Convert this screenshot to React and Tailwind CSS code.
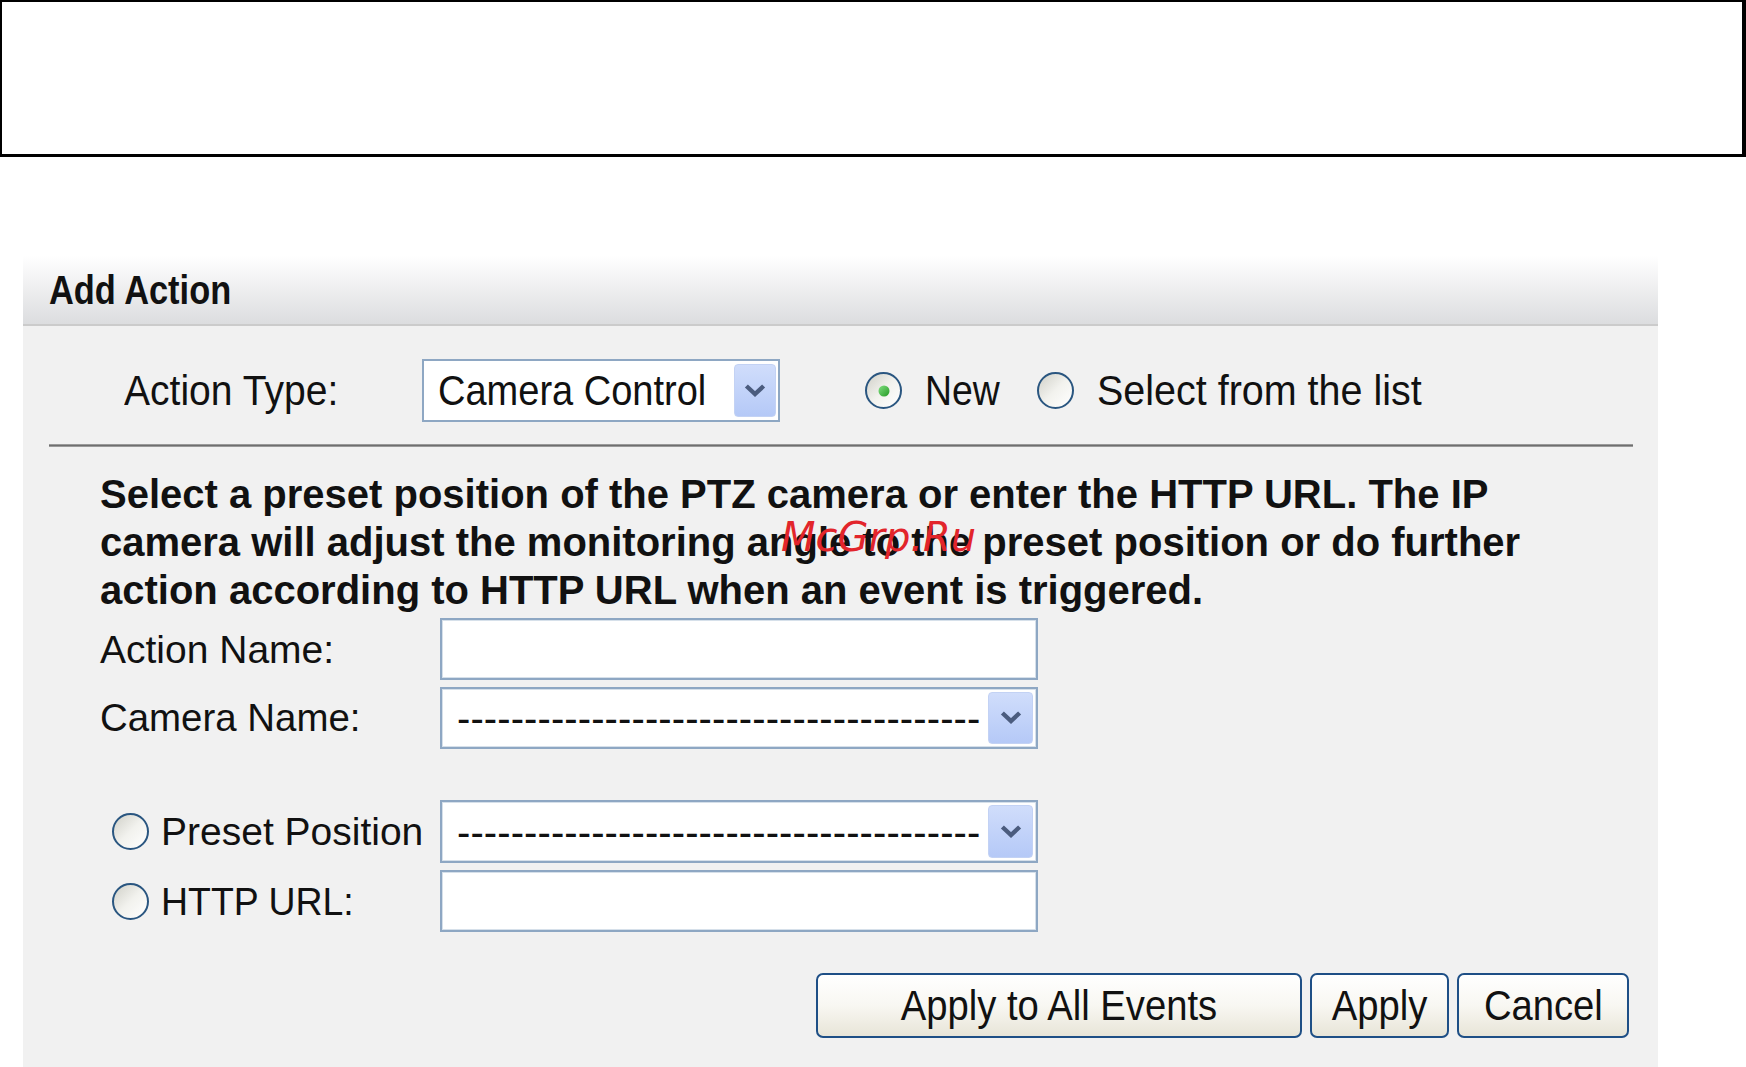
import React from 'react';

const DASHES = '---------------------------------------';

function Chevron() {
  return (
    <svg width="22" height="14" viewBox="0 0 22 14" fill="none">
      <path d="M4 3.5 L11 10 L18 3.5" stroke="#4b5c7e" strokeWidth="4.4" strokeLinecap="square" />
    </svg>
  );
}

function ArrowButton({ className = '' }) {
  return (
    <div className={`flex items-center justify-center self-stretch rounded-[4px] border border-[#c3d2f4] bg-gradient-to-b from-[#d0ddfb] to-[#b5c9f7] ${className}`}>
      <Chevron />
    </div>
  );
}

function Radio({ checked = false }) {
  return (
    <div className="relative h-[37px] w-[37px] shrink-0 rounded-full border-2 border-[#2a5680] bg-gradient-to-br from-[#d0d0c8] via-[#f2f2ee] to-white">
      {checked && (
        <div className="absolute left-1/2 top-1/2 h-[11px] w-[11px] -translate-x-1/2 -translate-y-1/2 rounded-full bg-gradient-to-br from-[#7ee07e] to-[#1f9a1f]" />
      )}
    </div>
  );
}

function TextBox() {
  return (
    <div className="h-full w-[598px] border-2 border-[#8ea7c3] bg-white shadow-[inset_0_0_0_1px_#d6e0ea]" />
  );
}

function DropDown() {
  return (
    <div className="flex h-full w-[598px] items-center border-2 border-[#8ea7c3] bg-white py-[3px] pl-[15px] pr-[3px] shadow-[inset_0_0_0_1px_#d6e0ea]">
      <span className="flex-1 whitespace-nowrap text-[40px] leading-none tracking-[0.1px] text-[#111]">{DASHES}</span>
      <ArrowButton className="w-[45px]" />
    </div>
  );
}

function Btn({ label, width }) {
  return (
    <button className={`flex h-full items-center justify-center rounded-[7px] border-2 border-[#1e4f86] bg-gradient-to-b from-white via-[#f8f7f2] to-[#e8e5d8] ${width}`}>
      <span className="inline-block scale-x-[0.91] text-[42px] leading-none text-[#111]">{label}</span>
    </button>
  );
}

export default function App() {
  return (
    <div className="h-[1067px] overflow-hidden bg-white font-['Liberation_Sans',Arial,sans-serif] text-[#111]">
      <div className="h-[157px] w-full border-b-[3px] border-l-2 border-r-4 border-t-2 border-black" />

      <div className="ml-[23px] mt-[99px] flex h-[811px] w-[1635px] flex-col bg-[#f1f1f1]">
        {/* title bar */}
        <div className="flex h-[70px] items-center border-b-2 border-[#cbcbcb] bg-gradient-to-b from-white to-[#dcdddf] pl-[26px]">
          <span className="inline-block origin-left scale-x-[0.86] text-[40px] font-bold leading-none">Add Action</span>
        </div>

        {/* action type row */}
        <div className="mt-[33px] flex h-[63px] items-center">
          <div className="w-[399px] pl-[101px]">
            <span className="inline-block origin-left scale-x-[0.93] text-[42px] leading-none">Action Type:</span>
          </div>
          <div className="flex h-full w-[358px] items-center border-2 border-[#8ea7c3] bg-white py-[3px] pl-[14px] pr-[2px]">
            <span className="flex-1 whitespace-nowrap">
              <span className="inline-block origin-left scale-x-[0.905] text-[42px] leading-none">Camera Control</span>
            </span>
            <ArrowButton className="w-[46px]" />
          </div>
          <div className="ml-[85px] flex items-center">
            <Radio checked />
            <span className="ml-[23px] inline-block w-[112px] whitespace-nowrap">
              <span className="inline-block origin-left scale-x-[0.89] text-[42px] leading-none">New</span>
            </span>
            <Radio />
            <span className="ml-[23px] inline-block whitespace-nowrap">
              <span className="inline-block origin-left scale-x-[0.94] text-[42px] leading-none">Select from the list</span>
            </span>
          </div>
        </div>

        <div className="ml-[26px] mt-[22px] h-[3px] w-[1584px] border-y border-[#9a9a9a] bg-[#6f6f6f]" />

        {/* description */}
        <div className="relative mt-[23px] pl-[77px]">
          <p className="whitespace-nowrap text-[40px] font-bold leading-[48px] text-[#111]">
            Select a preset position of the PTZ camera or enter the HTTP URL. The IP<br />
            camera will adjust the monitoring angle to the preset position or do further<br />
            action according to HTTP URL when an event is triggered.
          </p>
          <span className="absolute left-[758px] top-[47px] font-['DejaVu_Sans',sans-serif] text-[40px] italic leading-none text-[#e2252b]">
            McGrp.Ru
          </span>
        </div>

        {/* fields */}
        <div className="mt-[4px] flex h-[62px] items-center">
          <div className="w-[417px] pl-[77px] text-[39px] leading-none">Action Name:</div>
          <TextBox />
        </div>
        <div className="mt-[7px] flex h-[62px] items-center">
          <div className="w-[417px] pl-[77px]">
            <span className="inline-block origin-left scale-x-[0.985] text-[39px] leading-none">Camera Name:</span>
          </div>
          <DropDown />
        </div>

        <div className="mt-[51px] flex h-[63px] items-center">
          <div className="flex w-[417px] items-center pl-[89px]">
            <Radio />
            <span className="ml-[12px] whitespace-nowrap text-[39px] leading-none">Preset Position</span>
          </div>
          <DropDown />
        </div>
        <div className="mt-[7px] flex h-[62px] items-center">
          <div className="flex w-[417px] items-center pl-[89px]">
            <Radio />
            <span className="ml-[12px] inline-block origin-left scale-x-[0.96] whitespace-nowrap text-[39px] leading-none">HTTP URL:</span>
          </div>
          <TextBox />
        </div>

        {/* buttons */}
        <div className="mt-[41px] flex h-[65px] justify-end gap-[8px] pr-[29px]">
          <Btn label="Apply to All Events" width="w-[486px]" />
          <Btn label="Apply" width="w-[139px]" />
          <Btn label="Cancel" width="w-[172px]" />
        </div>
      </div>
    </div>
  );
}
